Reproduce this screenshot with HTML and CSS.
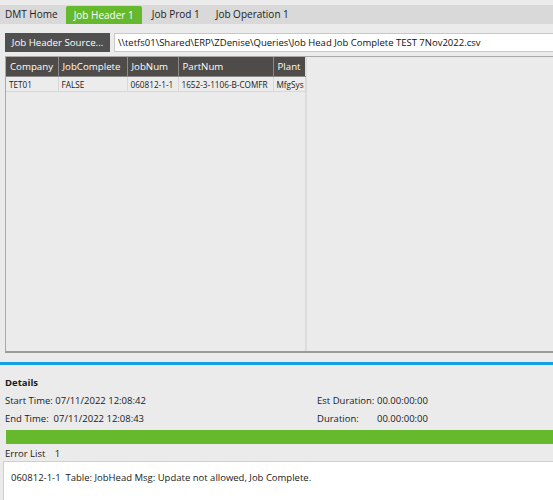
FILE: index.html
```html
<!DOCTYPE html>
<html lang="en">
<head>
  <meta charset="UTF-8" />
  <title>DMT - Job Header</title>
  <link rel="stylesheet" href="styles.css">
</head>
<body>
  <div class="tabs">
    <div class="tab">DMT Home</div>
    <div class="tab active">Job Header 1</div>
    <div class="tab">Job Prod 1</div>
    <div class="tab">Job Operation 1</div>
  </div>

  <div class="source-row">
    <button class="source-btn">Job Header Source...</button>
    <input class="source-path" type="text" value="\\tetfs01\Shared\ERP\ZDenise\Queries\Job Head Job Complete TEST 7Nov2022.csv">
  </div>

  <div class="grid-panel">
    <div class="grid">
      <table>
        <colgroup>
          <col style="width: 52px">
          <col style="width: 69px">
          <col style="width: 51px">
          <col style="width: 95px">
          <col style="width: 32px">
        </colgroup>
        <thead>
          <tr>
            <th>Company</th>
            <th>JobComplete</th>
            <th>JobNum</th>
            <th>PartNum</th>
            <th class="last">Plant</th>
          </tr>
        </thead>
        <tbody>
          <tr>
            <td>TET01</td>
            <td>FALSE</td>
            <td>060812-1-1</td>
            <td>1652-3-1106-B-COMFR</td>
            <td>MfgSys</td>
          </tr>
        </tbody>
      </table>
    </div>
  </div>

  <div class="splitter"></div>

  <div class="details">
    <div class="details-title">Details</div>
    <div class="detail-row">
      <div class="detail-left">Start Time: 07/11/2022 12:08:42</div>
      <div class="detail-right"><span class="lbl-dur">Est Duration:</span>00.00:00:00</div>
    </div>
    <div class="detail-row">
      <div class="detail-left">End Time:&nbsp; 07/11/2022 12:08:43</div>
      <div class="detail-right"><span class="lbl-dur">Duration:</span>00.00:00:00</div>
    </div>
    <div class="progress"><div class="progress-fill" style="width: 100%"></div></div>
    <div class="error-head">Error List <span class="error-count">1</span></div>
  </div>

  <div class="error-list">
    <div class="error-item">060812-1-1&nbsp; Table: JobHead Msg: Update not allowed, Job Complete.</div>
  </div>
</body>
</html>
```

FILE: styles.css
```css
body {
  margin: 0;
  padding-top: 5px;
  background: #ebebeb;
  font-family: 'Open Sans', sans-serif;
  font-size: 9.5px;
  color: #1a1a1a;
  overflow: hidden;
  height: 500px;
  box-sizing: border-box;
}

/* tab strip */
.tabs {
  display: flex;
  height: 19px;
  background: #d9d9d9;
  font-size: 10px;
}

.tab {
  padding: 0 8px;
  line-height: 19px;
  color: #222;
  white-space: nowrap;
}

.tab:first-child {
  padding-left: 5px;
}

.tab.active {
  background: #66b82c;
  color: white;
  margin-top: 1px;
  border-radius: 2px 2px 0 0;
}

.tab.active + .tab {
  padding-left: 10px;
}

/* source file row */
.source-row {
  display: flex;
  gap: 4px;
  padding: 9px 0 4px 5px;
}

.source-btn {
  height: 19px;
  width: 105px;
  padding: 0;
  border: none;
  background: #505050;
  color: white;
  font-family: inherit;
  font-size: 9.7px;
  white-space: nowrap;
}

.source-path {
  flex: 1;
  height: 19px;
  box-sizing: border-box;
  border: 1px solid #c8c8c8;
  border-right: none;
  background: white;
  padding: 0 3px;
  font-family: inherit;
  font-size: 9.5px;
  color: #111;
}

/* data grid */
.grid-panel {
  margin-left: 5px;
  height: 294px;
  border: 1px solid #a9a9a9;
  border-right: none;
  border-bottom: 2px solid #9a9a9a;
  background: #ebebeb;
  display: flex;
}

.grid {
  width: 299px;
  border-right: 2px solid #dcdcdc;
}

table {
  border-collapse: collapse;
  table-layout: fixed;
  width: 299px;
  font-size: 8.2px;
}

th {
  background: #4e4b49;
  color: white;
  font-weight: normal;
  font-size: 9.7px;
  text-align: left;
  height: 19px;
  padding: 0 3px 0 4px;
  white-space: nowrap;
  border-right: 1px solid #8a8a8a;
  border-bottom: 1px solid #8a8a8a;
}

th.last {
  border-right: none;
}

td {
  height: 14px;
  padding: 0 1px 0 3px;
  white-space: nowrap;
  overflow: hidden;
  border-right: 1px solid #d8d8d8;
  border-bottom: 1px solid #d8d8d8;
  background: #ececec;
}

.splitter {
  margin-top: 9px;
  height: 3px;
  background: #13a1e6;
}

/* details */
.details {
  padding: 9px 0 0 5px;
}

.details-title {
  font-weight: bold;
  height: 18px;
  line-height: 18px;
}

.detail-row {
  display: flex;
  height: 18px;
  line-height: 18px;
  white-space: nowrap;
}

.detail-left {
  width: 312px;
}

.lbl-dur {
  display: inline-block;
  width: 60px;
}

.progress {
  margin: 2px 0 0 1px;
  height: 14px;
  background: #e0e0e0;
}

.progress-fill {
  height: 100%;
  background: #66b82c;
}

.error-head {
  height: 17px;
  line-height: 20px;
}

.error-count {
  margin-left: 7px;
}

.error-list {
  margin-left: 3px;
  height: 39px;
  background: white;
  border-top: 1px solid #cfcfcf;
  border-left: 1px solid #cfcfcf;
}

.error-item {
  padding: 9px 0 0 7px;
}
```
